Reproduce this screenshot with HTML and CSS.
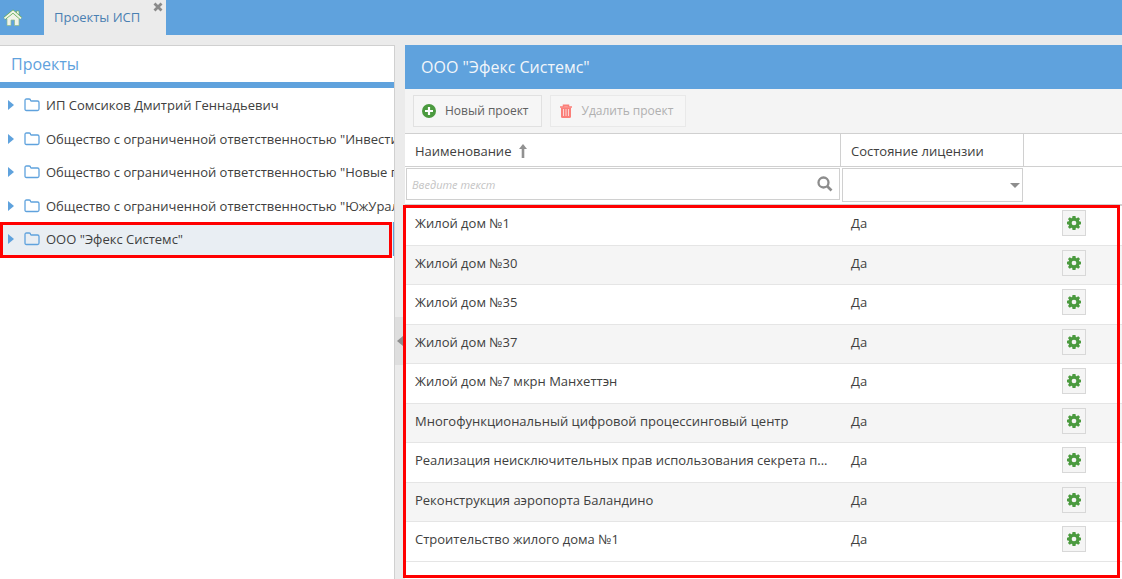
FILE: index.html
```html
<!DOCTYPE html>
<html lang="ru">
<head>
<meta charset="utf-8">
<title>Проекты ИСП</title>
<link rel="stylesheet" href="styles.css">
</head>
<body>
<svg class="defs" width="0" height="0" aria-hidden="true">
  <symbol id="folder" viewBox="0 0 16 14"><path d="M1 11V2.500Q1 1 2.500 1H5.200Q6.500 1 6.500 2.300Q6.500 3 7.300 3H13.500Q15 3 15 4.500V11Q15 12.500 13.500 12.500H2.500Q1 12.500 1 11Z" fill="none" stroke="currentColor" stroke-width="1.300"/></symbol>
  <symbol id="gear" viewBox="0 0 16 16"><path fill-rule="evenodd" d="M6.300 0h3.400l.4 2.200 .9.400 1.900-1.300 2 2-1.300 1.900.4.900 2.200.4v3l-2.200.4-.4.900 1.300 1.900-2 2-1.900-1.300-.9.400-.4 2.200H6.300l-.4-2.200-.9-.4-1.900 1.300-2-2 1.300-1.900-.4-.9L0 9.500v-3l2-.4.4-.9-1.300-1.900 2-2L5 2.600l.9-.4ZM8 5.300a2.700 2.700 0 1 0 0 5.400 2.700 2.700 0 0 0 0-5.400Z" fill="currentColor"/></symbol>
</svg>

<nav class="tabs">
  <button class="home" type="button" aria-label="Главная">
    <svg width="20" height="18" viewBox="0 0 20 18"><path d="M4 9v7.500h4V11h3.500v5.500h4.500V9l-6-5Z" fill="#f0f3ea"/><path d="M13.500 2h2.500v4.500L13.500 4.500Z" fill="#f0f3ea" stroke="#69aa55" stroke-width=".6"/><path d="M1.500 9.500 10 2.500l8 7" fill="none" stroke="#5fab48" stroke-width="3"/><path d="M1.500 9.500 10 2.500l8 7" fill="none" stroke="#f0f3ea" stroke-width="1.900"/><path d="M4 10v6.500h4V11h3.500v5.500H16V10" fill="none" stroke="#8fbb85" stroke-width=".7"/></svg>
  </button>
  <div class="tab">
    <a href="#projects">Проекты ИСП</a>
    <button class="close" type="button" aria-label="Закрыть"><svg width="10" height="10" viewBox="0 0 10 10"><path d="M1.500 1.500l7 7M8.500 1.500l-7 7" stroke="#8a8a8a" stroke-width="2.800"/></svg></button>
  </div>
</nav>

<main class="workspace">
  <aside class="side">
    <h2 class="side-title">Проекты</h2>
    <ul class="tree">
      <li><button class="node" type="button"><span class="expander"></span><svg class="folder"><use href="#folder"/></svg><span>ИП Сомсиков Дмитрий Геннадьевич</span></button></li>
      <li><button class="node" type="button"><span class="expander"></span><svg class="folder"><use href="#folder"/></svg><span>Общество с ограниченной ответственностью "Инвести</span></button></li>
      <li><button class="node" type="button"><span class="expander"></span><svg class="folder"><use href="#folder"/></svg><span>Общество с ограниченной ответственностью "Новые п</span></button></li>
      <li><button class="node" type="button"><span class="expander"></span><svg class="folder"><use href="#folder"/></svg><span>Общество с ограниченной ответственностью "ЮжУрал</span></button></li>
      <li class="selected"><button class="node" type="button"><span class="expander"></span><svg class="folder"><use href="#folder"/></svg><span>ООО "Эфекс Системс"</span></button></li>
    </ul>
  </aside>

  <div class="splitter"><button class="collapse" type="button" aria-label="Свернуть"></button></div>

  <section class="content">
    <h1 class="content-title">ООО "Эфекс Системс"</h1>
    <div class="toolbar">
      <button class="tool" type="button"><svg width="14" height="14" viewBox="0 0 14 14"><circle cx="7" cy="7" r="7" fill="#4b9a3f"/><path d="M7 3v8M3 7h8" stroke="#fff" stroke-width="2.200"/></svg>Новый проект</button>
      <button class="tool" type="button" disabled><svg width="14" height="14" viewBox="0 0 14 14"><path d="M1 3h12M4.500 3V1.200h5V3" fill="none" stroke="#fb7f79" stroke-width="1.500"/><path d="M2 3.500h10V12.500q0 1.500-1.500 1.500h-7Q2 14 2 12.500Z" fill="#fb7f79"/><path d="M4.500 5v7M7 5v7M9.500 5v7" stroke="#fcd6d4" stroke-width="1"/></svg>Удалить проект</button>
    </div>
    <div class="grid">
      <table>
        <colgroup><col><col class="col-state"><col class="col-action"></colgroup>
        <thead>
          <tr class="heads">
            <th scope="col">Наименование<svg class="sort" width="8" height="14" viewBox="0 0 8 14"><path d="M4 14V3" stroke="#919191" stroke-width="2.600"/><path d="M0 5 4 0l4 5Z" fill="#919191"/></svg></th>
            <th scope="col">Состояние лицензии</th>
            <th></th>
          </tr>
          <tr class="filters">
            <td><div class="search"><input type="text" placeholder="Введите текст" aria-label="Наименование"><svg width="16" height="16" viewBox="0 0 16 16"><circle cx="6.500" cy="6.500" r="5" fill="none" stroke="#8d8d8d" stroke-width="2.300"/><path d="M10 10l4.500 4.500" stroke="#8d8d8d" stroke-width="2.600"/></svg></div></td>
            <td><div class="pick"><select aria-label="Состояние лицензии"><option></option><option>Да</option></select></div></td>
            <td></td>
          </tr>
        </thead>
        <tbody>
          <tr><td>Жилой дом №1</td><td>Да</td><td><button class="gear" type="button" aria-label="Настройки"><svg><use href="#gear"/></svg></button></td></tr>
          <tr><td>Жилой дом №30</td><td>Да</td><td><button class="gear" type="button" aria-label="Настройки"><svg><use href="#gear"/></svg></button></td></tr>
          <tr><td>Жилой дом №35</td><td>Да</td><td><button class="gear" type="button" aria-label="Настройки"><svg><use href="#gear"/></svg></button></td></tr>
          <tr><td>Жилой дом №37</td><td>Да</td><td><button class="gear" type="button" aria-label="Настройки"><svg><use href="#gear"/></svg></button></td></tr>
          <tr><td>Жилой дом №7 мкрн Манхеттэн</td><td>Да</td><td><button class="gear" type="button" aria-label="Настройки"><svg><use href="#gear"/></svg></button></td></tr>
          <tr><td>Многофункциональный цифровой процессинговый центр</td><td>Да</td><td><button class="gear" type="button" aria-label="Настройки"><svg><use href="#gear"/></svg></button></td></tr>
          <tr><td>Реализация неисключительных прав использования секрета п...</td><td>Да</td><td><button class="gear" type="button" aria-label="Настройки"><svg><use href="#gear"/></svg></button></td></tr>
          <tr><td>Реконструкция аэропорта Баландино</td><td>Да</td><td><button class="gear" type="button" aria-label="Настройки"><svg><use href="#gear"/></svg></button></td></tr>
          <tr><td>Строительство жилого дома №1</td><td>Да</td><td><button class="gear" type="button" aria-label="Настройки"><svg><use href="#gear"/></svg></button></td></tr>
        </tbody>
      </table>
      <div class="grid-outline"></div>
    </div>
  </section>
</main>
</body>
</html>
```
FILE: styles.css
```css
* { box-sizing: border-box; }

body {
  margin: 0;
  min-height: 100vh;
  display: flex;
  flex-direction: column;
  background: #ebebeb;
  color: #404040;
  font: 13px/18px "Open Sans", "Noto Sans", sans-serif;
}

button, input, select { font: inherit; color: inherit; margin: 0; }
button { padding: 0; border: 0; background: none; }
svg { display: block; flex: none; }
.defs { position: absolute; }

.tabs { display: flex; height: 35px; background: #5fa2dd; }
.home { width: 44px; padding-left: 3px; }
.tab {
  position: relative;
  padding: 8px 26px 0 10px;
  background: #ebebeb;
}
.tab a { color: #4a80b2; text-decoration: none; }
.close { position: absolute; top: 2px; right: 3px; }

.workspace { flex: 1; display: flex; padding-top: 10px; }

.side {
  width: 395px;
  flex: none;
  background: #fff;
  border-top: 1px solid #d0d0d0;
  border-right: 1px solid #d0d0d0;
}
.side-title {
  margin: 0;
  padding: 6px 11px;
  border-bottom: 6px solid #5fa2dd;
  color: #5fa2dd;
  font-size: 16px;
  font-weight: 400;
  line-height: 24px;
}
.tree { margin: 0; padding: 0; list-style: none; }
.tree li { position: relative; height: 34px; }
.tree li:nth-child(even) { height: 33px; }
.tree .selected { background: #e9eef3; border-right: 1px solid #5fa2dd; }
.tree .selected::after {
  content: "";
  position: absolute;
  inset: 0 1px -2px 0;
  border: 3px solid #f00;
}
.node {
  display: flex;
  align-items: center;
  width: 100%;
  height: 100%;
  padding-left: 8px;
  overflow: hidden;
  white-space: nowrap;
}
.expander {
  border: 5px solid transparent;
  border-left: 6px solid #5fa2dd;
  border-right: 0;
}
.folder { width: 16px; height: 14px; margin: 0 6px 0 10px; color: #5fa2dd; }

.splitter { display: flex; align-items: center; width: 10px; flex: none; padding-top: 57px; }
.collapse {
  display: flex;
  align-items: center;
  justify-content: flex-end;
  width: 10px;
  height: 48px;
  background: #dedede;
}
.collapse::before {
  content: "";
  border: 5px solid transparent;
  border-right: 6px solid #8d8d8d;
  border-left: 0;
  margin-right: 2px;
}

.content { flex: 1; min-width: 0; display: flex; flex-direction: column; background: #fff; }
.content-title {
  margin: 0;
  padding: 10px 16px;
  background: #5fa2dd;
  color: #f2f6fa;
  font-size: 16px;
  font-weight: 400;
  line-height: 24px;
}
.toolbar {
  display: flex;
  gap: 8px;
  padding: 6px 8px;
  background: #f4f4f4;
  border-bottom: 1px solid #d0d0d0;
}
.tool {
  display: flex;
  align-items: center;
  gap: 9px;
  height: 32px;
  padding: 0 12px 0 8px;
  border: 1px solid #e1e1e1;
  background: #f6f6f6;
  color: #606060;
  font-size: 12px;
}
.tool:disabled { color: #b0b0b0; border-color: #e9e9e9; }

.grid { position: relative; flex: 1; }
.grid-outline {
  position: absolute;
  inset: 71px 2px 1px -2px;
  border: 3px solid #f00;
  pointer-events: none;
}
table { width: 100%; table-layout: fixed; border-collapse: separate; border-spacing: 0; }
.col-state { width: 183px; }
.col-action { width: 98px; }
th, td { padding: 0 10px; text-align: left; font-weight: 400; white-space: nowrap; }

.heads th { height: 33px; padding-top: 2px; border-right: 1px solid #d0d0d0; border-bottom: 1px solid #d0d0d0; }
.heads th:last-child { border-right: 0; }
.sort { display: inline-block; margin-left: 8px; vertical-align: -2px; }

.filters td { height: 39px; padding: 1px; vertical-align: top; border-bottom: 2px solid #d0d0d0; }
.search, .pick { position: relative; display: flex; align-items: center; border: 1px solid #d0d0d0; height: 32px; }
.pick { height: 34px; }
.search { padding-right: 6px; }
.search input {
  flex: 1;
  min-width: 0;
  padding: 0 5px;
  border: 0;
  outline: 0;
  background: none;
}
.search input::placeholder { color: #c4c4c4; font-size: 11px; font-style: italic; opacity: 1; }
.pick select { width: 100%; height: 100%; border: 0; background: none; appearance: none; }
.pick::after {
  content: "";
  position: absolute;
  right: 2px;
  border: 5px solid transparent;
  border-top-color: #8d8d8d;
  border-bottom: 0;
  pointer-events: none;
}

tbody td { height: 40px; padding-bottom: 5px; border-bottom: 1px solid #e5e5e5; overflow: hidden; text-overflow: ellipsis; }
tbody tr:nth-child(even) td { height: 39px; background: #f5f5f5; }
tbody td:last-child { padding-left: 38px; }
.gear {
  display: flex;
  justify-content: center;
  align-items: center;
  width: 24px;
  height: 26px;
  border: 1px solid #d8d8d8;
  background: #f5f5f5;
  color: #4b9a3f;
}
.gear svg { width: 14px; height: 14px; }
```
